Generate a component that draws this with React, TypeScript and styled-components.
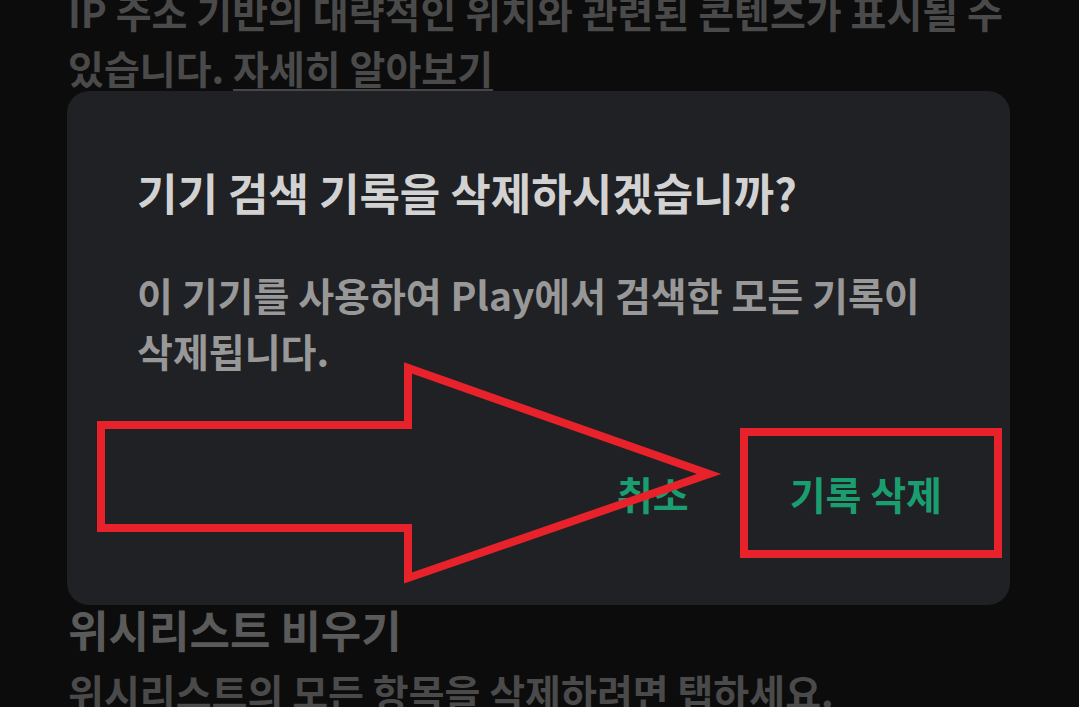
import React from "react";
import styled, { createGlobalStyle } from "styled-components";

const GlobalStyle = createGlobalStyle`
  html, body {
    margin: 0;
    padding: 0;
    background: #0c0c0c;
  }
  body {
    font-family: "Noto Sans CJK KR", "Noto Sans", sans-serif;
  }
`;

const Page = styled.div`
  position: relative;
  width: 1079px;
  height: 707px;
  overflow: hidden;
  background: #0c0c0c;
  box-sizing: border-box;
  padding: 0 0 0 68px;
`;

const Paragraph = styled.p<{ $top?: number }>`
  margin: ${(p) => p.$top ?? 0}px 0 0;
  font-size: 39px;
  line-height: 56px;
  font-weight: 700;
  color: #4a4a4a;
  white-space: nowrap;
`;

const Link = styled.span`
  text-decoration: underline;
  text-decoration-color: #474747;
  text-underline-offset: 5px;
  text-decoration-thickness: 2px;
`;

const SectionTitle = styled.h2`
  margin: 506px 0 0;
  font-size: 44px;
  line-height: 56px;
  font-weight: 700;
  color: #5a5a5a;
`;

const Dialog = styled.div`
  position: absolute;
  left: 67px;
  top: 91px;
  width: 943px;
  box-sizing: border-box;
  padding: 74px 68px 85px 70px;
  background: #202124;
  border-radius: 22px;
  display: flex;
  flex-direction: column;
`;

const DialogTitle = styled.h1`
  margin: 0;
  font-size: 44px;
  line-height: 54px;
  font-weight: 700;
  color: #d2d2d2;
  white-space: nowrap;
`;

const DialogBody = styled.p`
  margin: 47px 0 0;
  font-size: 39px;
  line-height: 56px;
  font-weight: 600;
  color: #989898;
  white-space: nowrap;
`;

const Actions = styled.div`
  margin-top: 88px;
  display: flex;
  justify-content: flex-end;
  align-items: center;
  gap: 101px;
`;

const ActionButton = styled.button`
  background: none;
  border: none;
  padding: 0;
  font-family: inherit;
  font-size: 39px;
  line-height: 54px;
  font-weight: 700;
  color: #1b9e6f;
`;

const Annotation = styled.svg`
  position: absolute;
  left: 0;
  top: 0;
  width: 1079px;
  height: 707px;
  pointer-events: none;
`;

export default function App() {
  return (
    <>
      <GlobalStyle />
      <Page>
        <Paragraph $top={-17}>
          IP 주소 기반의 대략적인 위치와 관련된 콘텐츠가 표시될 수
          <br />
          있습니다. <Link>자세히 알아보기</Link>
        </Paragraph>
        <SectionTitle>위시리스트 비우기</SectionTitle>
        <Paragraph $top={6}>위시리스트의 모든 항목을 삭제하려면 탭하세요.</Paragraph>

        <Dialog>
          <DialogTitle>기기 검색 기록을 삭제하시겠습니까?</DialogTitle>
          <DialogBody>
            이 기기를 사용하여 Play에서 검색한 모든 기록이
            <br />
            삭제됩니다.
          </DialogBody>
          <Actions>
            <ActionButton>취소</ActionButton>
            <ActionButton>기록 삭제</ActionButton>
          </Actions>
        </Dialog>

        <Annotation viewBox="0 0 1079 707">
          <polygon
            points="101,425 408,425 408,368 709,474 408,578 408,528 101,528"
            fill="none"
            stroke="#e8222b"
            strokeWidth="8"
            strokeLinejoin="miter"
          />
          <rect
            x="744"
            y="432"
            width="254"
            height="122"
            fill="none"
            stroke="#e8222b"
            strokeWidth="8"
          />
        </Annotation>
      </Page>
    </>
  );
}
